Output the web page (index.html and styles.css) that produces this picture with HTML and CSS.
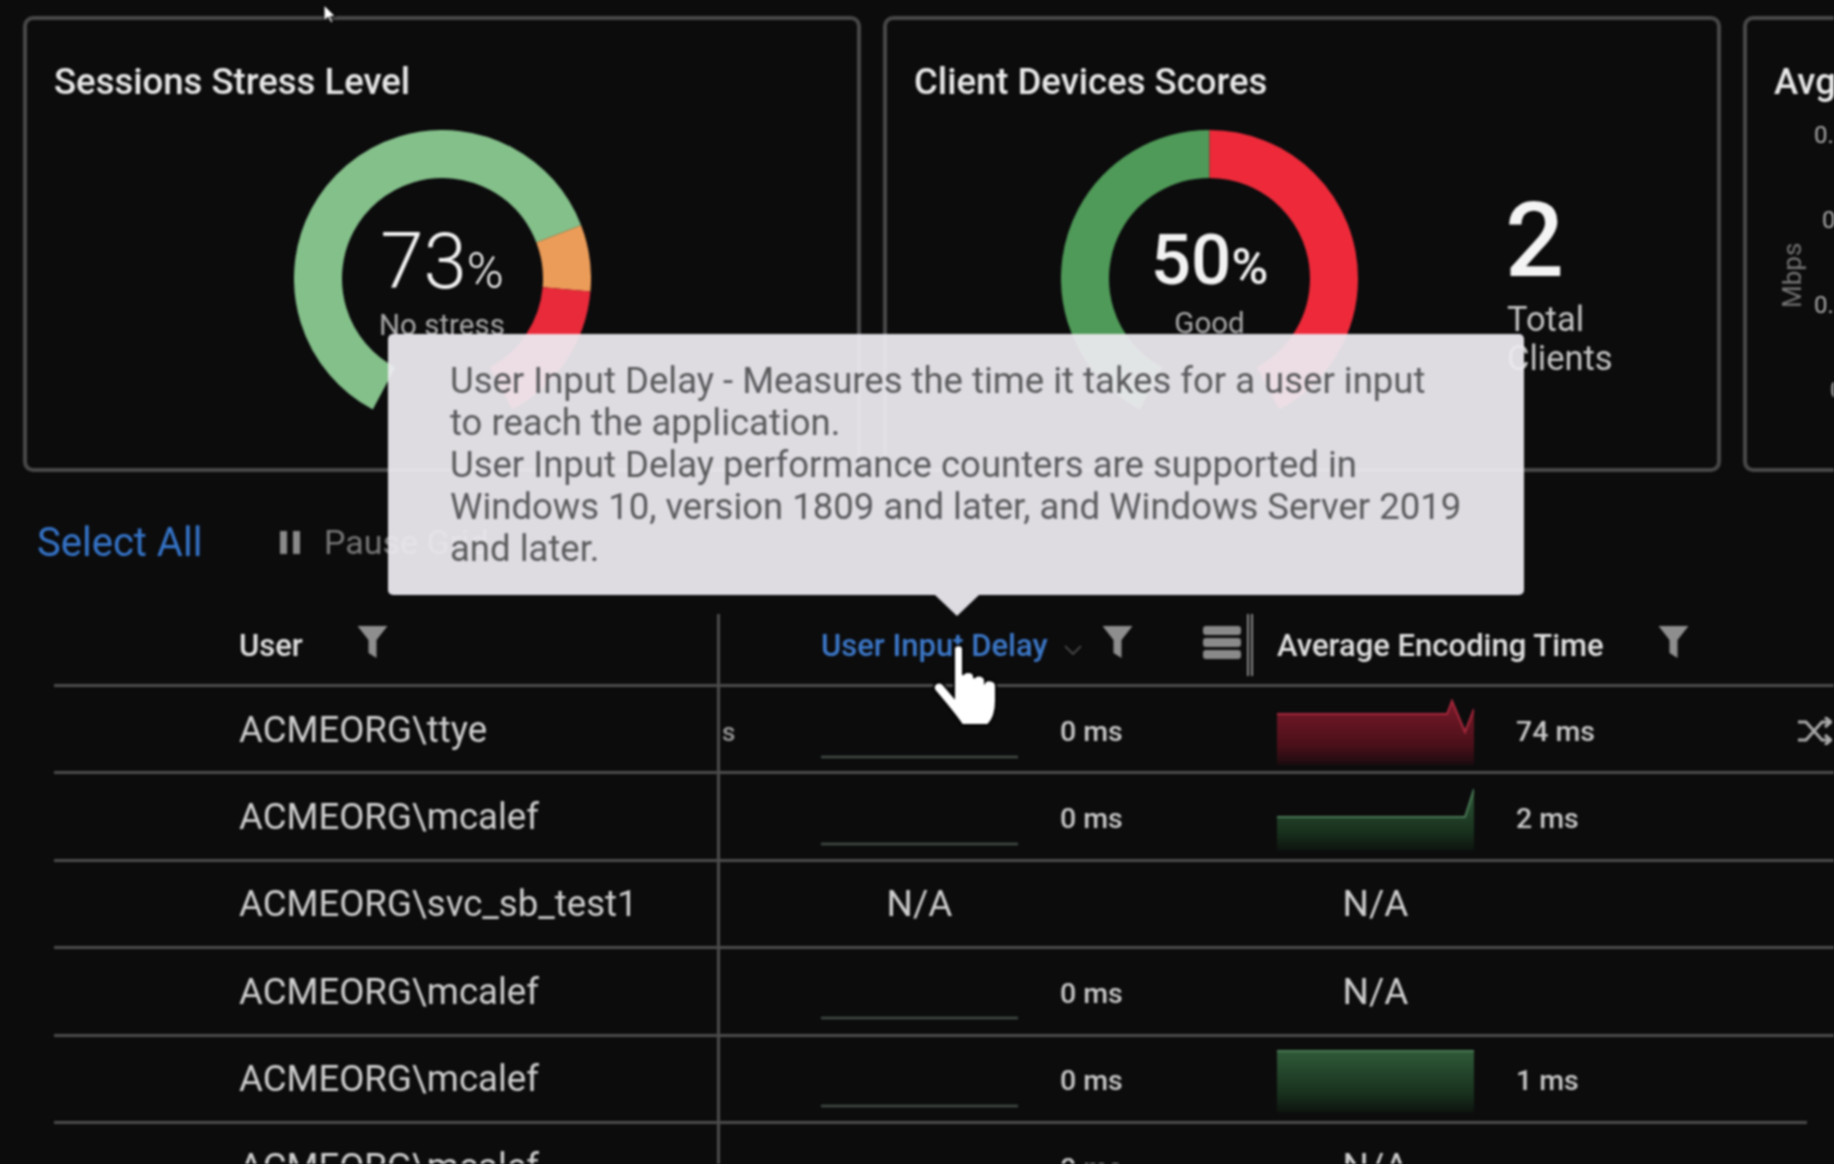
FILE: index.html
```html
<!DOCTYPE html>
<html lang="en">
<head>
  <meta charset="UTF-8" />
  <title>Sessions</title>
  <link rel="stylesheet" href="styles.css">
</head>
<body>

  <svg class="defs" width="0" height="0">
    <defs>
      <linearGradient id="redFade" x1="0" y1="0" x2="0" y2="1">
        <stop offset="0" stop-color="#7a1a2a"/>
        <stop offset="0.7" stop-color="#4a1019"/>
        <stop offset="1" stop-color="#1a0c0f"/>
      </linearGradient>
      <linearGradient id="greenFade" x1="0" y1="0" x2="0" y2="1">
        <stop offset="0" stop-color="#2f5a38"/>
        <stop offset="0.7" stop-color="#18301d"/>
        <stop offset="1" stop-color="#0d120e"/>
      </linearGradient>
      <symbol id="funnel" viewBox="0 0 30 32">
        <path d="M0 0H30L19 14V32L11 27V14Z"/>
      </symbol>
    </defs>
  </svg>

  <div class="cards">
    <section class="card">
      <h2>Sessions Stress Level</h2>
      <div class="card-body center">
        <div class="gauge">
          <svg width="297" height="297" viewBox="0 0 297 297">
            <circle class="arc" cx="148.5" cy="148.5" r="124.5" pathLength="360" stroke="#84c08a" stroke-dasharray="221 139" transform="rotate(118 148.5 148.5)"/>
            <circle class="arc" cx="148.5" cy="148.5" r="124.5" pathLength="360" stroke="#eb9c58" stroke-dasharray="26 334" transform="rotate(-21 148.5 148.5)"/>
            <circle class="arc" cx="148.5" cy="148.5" r="124.5" pathLength="360" stroke="#e92a3a" stroke-dasharray="57 303" transform="rotate(5 148.5 148.5)"/>
          </svg>
          <div class="gauge-text">
            <div class="pct">73<small>%</small></div>
            <div class="gauge-label">No stress</div>
          </div>
        </div>
      </div>
    </section>

    <section class="card">
      <h2>Client Devices Scores</h2>
      <div class="card-body devices">
        <div class="gauge">
          <svg width="297" height="297" viewBox="0 0 297 297">
            <circle class="arc" cx="148.5" cy="148.5" r="124.5" pathLength="360" stroke="#4f9a58" stroke-dasharray="152 208" transform="rotate(118 148.5 148.5)"/>
            <circle class="arc" cx="148.5" cy="148.5" r="124.5" pathLength="360" stroke="#ee2a3a" stroke-dasharray="152 208" transform="rotate(-90 148.5 148.5)"/>
          </svg>
          <div class="gauge-text">
            <div class="pct heavy">50<small>%</small></div>
            <div class="gauge-label">Good</div>
          </div>
        </div>
        <div class="total">
          <div class="total-num">2</div>
          <div class="total-label">Total<br>Clients</div>
        </div>
      </div>
    </section>

    <section class="card">
      <h2>Avg</h2>
      <div class="card-body chart">
        <div class="mbps">Mbps</div>
        <div class="ticks">
          <span>0.3</span>
          <span>0.2</span>
          <span>0.1</span>
          <span>0</span>
        </div>
      </div>
    </section>
  </div>

  <div class="toolbar">
    <a class="select-all">Select All</a>
    <span class="pause-icon"></span>
    <span class="pause-text">Pause Grid</span>
  </div>

  <div class="grid">
    <div class="row head">
      <div class="cell user">User <svg class="funnel first"><use href="#funnel"/></svg></div>
      <div class="cell delay">
        <span class="sorted">User Input Delay</span>
        <svg class="chevron" width="18" height="10" viewBox="0 0 18 10"><path d="M1 1L9 9L17 1" fill="none" stroke="#444" stroke-width="2"/></svg>
        <svg class="funnel"><use href="#funnel"/></svg>
        <span class="menu-icon"><i></i><i></i><i></i></span>
        <span class="grip"></span>
      </div>
      <div class="cell enc">Average Encoding Time <svg class="funnel last"><use href="#funnel"/></svg></div>
    </div>

    <div class="row">
      <div class="cell user">ACMEORG\ttye</div>
      <div class="cell delay">
        <span class="lead">s</span>
        <svg class="spark" viewBox="0 0 197 80"><path class="flat" d="M0 68H197"/></svg>
        <span class="val">0 ms</span>
      </div>
      <div class="cell enc">
        <svg class="spark" viewBox="0 0 197 80">
          <path fill="url(#redFade)" d="M0 25H170L175 12L188 43L197 20V76H0Z"/>
          <path fill="none" stroke="#a8283c" stroke-width="2" d="M0 25H170L175 12L188 43L197 20"/>
        </svg>
        <span class="val">74 ms</span>
        <svg class="shuffle" width="34" height="28" viewBox="0 0 34 28" fill="none" stroke="#aaa" stroke-width="3">
          <path d="M0 5H8L24 23H33M0 23H8L24 5H33M27 0L33 5L27 10M27 18L33 23L27 28"/>
        </svg>
      </div>
    </div>

    <div class="row">
      <div class="cell user">ACMEORG\mcalef</div>
      <div class="cell delay">
        <span class="lead"></span>
        <svg class="spark" viewBox="0 0 197 80"><path class="flat" d="M0 67H197"/></svg>
        <span class="val">0 ms</span>
      </div>
      <div class="cell enc">
        <svg class="spark" viewBox="0 0 197 80">
          <path fill="url(#greenFade)" d="M0 40H188L197 12V74H0Z"/>
          <path fill="none" stroke="#4a7a55" stroke-width="2" d="M0 40H188L197 12"/>
        </svg>
        <span class="val">2 ms</span>
      </div>
    </div>

    <div class="row">
      <div class="cell user">ACMEORG\svc_sb_test1</div>
      <div class="cell delay">
        <span class="lead"></span>
        <span class="na">N/A</span>
      </div>
      <div class="cell enc"><span class="na">N/A</span></div>
    </div>

    <div class="row">
      <div class="cell user">ACMEORG\mcalef</div>
      <div class="cell delay">
        <span class="lead"></span>
        <svg class="spark" viewBox="0 0 197 80"><path class="flat" d="M0 67H197"/></svg>
        <span class="val">0 ms</span>
      </div>
      <div class="cell enc"><span class="na">N/A</span></div>
    </div>

    <div class="row short-line">
      <div class="cell user">ACMEORG\mcalef</div>
      <div class="cell delay">
        <span class="lead"></span>
        <svg class="spark" viewBox="0 0 197 80"><path class="flat" d="M0 67H197"/></svg>
        <span class="val">0 ms</span>
      </div>
      <div class="cell enc">
        <svg class="spark" viewBox="0 0 197 80">
          <path fill="url(#greenFade)" d="M0 12H197V74H0Z"/>
          <path fill="none" stroke="#4a7a55" stroke-width="2" d="M0 12H197"/>
        </svg>
        <span class="val">1 ms</span>
      </div>
    </div>

    <div class="row">
      <div class="cell user">ACMEORG\mcalef</div>
      <div class="cell delay">
        <span class="lead"></span>
        <svg class="spark" viewBox="0 0 197 80"></svg>
        <span class="val">0 ms</span>
      </div>
      <div class="cell enc"><span class="na">N/A</span></div>
    </div>
  </div>

  <!-- tooltip over the delay column header -->
  <div class="tooltip">
    User Input Delay - Measures the time it takes for a user input<br>
    to reach the application.<br>
    User Input Delay performance counters are supported in<br>
    Windows 10, version 1809 and later, and Windows Server 2019<br>
    and later.
  </div>

  <svg class="arrow-cursor" width="13" height="20" viewBox="0 0 13 20">
    <path d="M1 1V17L5 13L8 19L10 18L7.500 12.500H12.500Z" fill="#fff" stroke="#000"/>
  </svg>

  <svg class="hand-cursor" width="70" height="86" viewBox="0 0 70 86">
    <path d="M22 8C22 3 31 3 31 8V34C32 30 41 30 42 35V37C44 33 52 34 53 39V41C55 38 64 39 64 45V60C64 72 60 80 56 84H30C26 78 20 70 3 50C-1 44 6 39 11 43L22 56Z" fill="#fff" stroke="#000" stroke-width="2"/>
  </svg>

</body>
</html>
```

FILE: styles.css
```css
html, body {
  margin: 0;
  height: 100%;
  overflow: hidden;
}

body {
  position: relative;
  background-color: #0c0c0d;
  color: #d0d0d0;
  font-family: Roboto, "Liberation Sans", sans-serif;
  filter: blur(0.8px);
}

.defs {
  position: absolute;
}

.cards {
  display: flex;
  gap: 22px;
  padding: 16px 0 0 23px;
  width: 3000px;
}

.card {
  box-sizing: border-box;
  flex: none;
  width: 838px;
  height: 456px;
  border: 4px solid #484848;
  border-radius: 10px;
  padding: 0 27px;
}

.card h2 {
  margin: 0;
  padding-top: 41px;
  font-size: 36.500px;
  line-height: 42px;
  font-weight: 500;
  color: #e8e8e8;
}

.card-body {
  display: flex;
  margin: 27px -27px 0;
}

.center {
  justify-content: center;
}

.devices {
  padding-left: 174px;
}

.gauge {
  position: relative;
  width: 297px;
  height: 297px;
}

.arc {
  fill: none;
  stroke-width: 48;
}

.gauge-text {
  position: absolute;
  inset: 0;
  display: flex;
  flex-direction: column;
  align-items: center;
  padding-top: 84px;
}

.pct {
  margin: 2px 0 0;
  font-size: 78px;
  font-weight: 300;
  line-height: 92px;
  color: #f2f2f2;
}

.pct.heavy {
  margin: 0 0 2px;
  font-weight: 500;
  font-size: 71px;
}

.pct small {
  font-size: 50px;
}

.gauge-label {
  font-size: 29.500px;
  line-height: 32px;
  margin-top: -8px;
  color: #aaa;
}

.total {
  margin-left: 147px;
  padding-top: 52px;
}

.total-num {
  font-size: 104px;
  line-height: 118px;
  font-weight: 500;
  color: #f4f4f4;
}

.total-label {
  font-size: 34.500px;
  line-height: 39px;
  color: #c4c4c4;
  margin-left: 2px;
}

.chart {
  display: flex;
  margin: 0;
  position: relative;
}

.mbps {
  writing-mode: vertical-rl;
  transform: rotate(180deg);
  font-size: 26px;
  color: #777;
  margin: 135px 0 0 3px;
  height: 70px;
}

.ticks {
  display: flex;
  flex-direction: column;
  gap: 49px;
  margin: 14px 0 0 7px;
  font-size: 24px;
  line-height: 36px;
  color: #aaa;
}

.ticks span:nth-child(2) {
  margin-left: 8px;
}

.ticks span:nth-child(4) {
  margin-left: 16px;
}

.toolbar {
  display: flex;
  align-items: center;
  box-sizing: border-box;
  height: 140px;
  padding: 0 0 0 37px;
}

.select-all {
  font-size: 40px;
  color: #3574c8;
  width: 243px;
}

.pause-icon {
  box-sizing: content-box;
  width: 6px;
  height: 23px;
  border-left: 7px solid #8a8a8a;
  border-right: 7px solid #8a8a8a;
}

.pause-text {
  margin-left: 24px;
  font-size: 34px;
  color: #777;
}

.grid {
  margin-left: 54px;
  margin-top: 2px;
}

.row {
  display: grid;
  grid-template-columns: 663px 560px 1fr;
  box-sizing: border-box;
  height: 87.4px;
  border-bottom: 3px solid #4c4c4c;
}

.row.head {
  height: 73px;
  font-size: 31px;
  font-weight: 500;
  color: #e0e0e0;
}

.row.short-line {
  margin-right: 27px;
}

.cell {
  display: flex;
  align-items: center;
  min-width: 0;
}

.head .cell {
  padding-bottom: 7px;
}

.cell.user {
  padding-left: 185px;
  font-size: 36.600px;
  color: #cfcfcf;
}

.head .cell.user {
  font-size: 31px;
  color: #e0e0e0;
}

.cell.delay {
  border-left: 3px solid #4c4c4c;
  margin-bottom: -3px;
  padding-bottom: 3px;
}

.head .cell.delay {
  padding-left: 101px;
  padding-bottom: 10px;
}

.lead {
  flex: none;
  width: 101px;
  box-sizing: border-box;
  padding: 6px 0 0 2px;
  font-size: 26px;
  font-weight: 500;
  color: #999;
}

.sorted {
  color: #3c78c8;
  white-space: nowrap;
}

.chevron {
  margin-left: 16px;
  margin-top: 8px;
}

.funnel {
  width: 31px;
  height: 32px;
  fill: #8e8e8e;
  margin: -8px 0 0 20px;
}

.funnel.first {
  margin-left: 54px;
}

.funnel.last {
  margin-left: 54px;
}

.menu-icon {
  display: flex;
  flex-direction: column;
  gap: 3px;
  margin: -6px 0 0 70px;
}

.menu-icon i {
  display: block;
  width: 38px;
  height: 9px;
  border-radius: 3px;
  background: #8a8a8a;
}

.grip {
  align-self: flex-start;
  width: 2px;
  height: 62px;
  margin-left: 6px;
  border-left: 2px solid #888;
  border-right: 2px solid #888;
}

.spark {
  flex: none;
  width: 197px;
  height: 80px;
}

.flat {
  fill: none;
  stroke: #424c45;
  stroke-width: 2.500;
}

.val {
  margin-left: 42px;
  padding-top: 4px;
  font-size: 28.500px;
  font-weight: 500;
  color: #c8c8c8;
}

.na {
  flex: none;
  width: 197px;
  text-align: center;
  font-size: 37px;
  color: #cfcfcf;
}

.shuffle {
  margin-left: auto;
  margin-right: 2px;
  margin-top: 4px;
}

.tooltip {
  position: absolute;
  left: 388px;
  top: 334px;
  width: 1136px;
  height: 261px;
  box-sizing: border-box;
  padding: 26px 0 0 62px;
  background: rgba(236, 234, 239, 0.94);
  border-radius: 5px;
  font-size: 36.500px;
  line-height: 42px;
  color: #5a5a5c;
  white-space: nowrap;
}

.tooltip::after {
  content: "";
  position: absolute;
  left: 547px;
  top: 100%;
  border: 22px solid transparent;
  border-bottom: none;
  border-top: 21px solid rgba(236, 234, 239, 0.94);
}

.arrow-cursor {
  position: absolute;
  left: 323px;
  top: 4px;
}

.hand-cursor {
  position: absolute;
  left: 932px;
  top: 641px;
}
```
